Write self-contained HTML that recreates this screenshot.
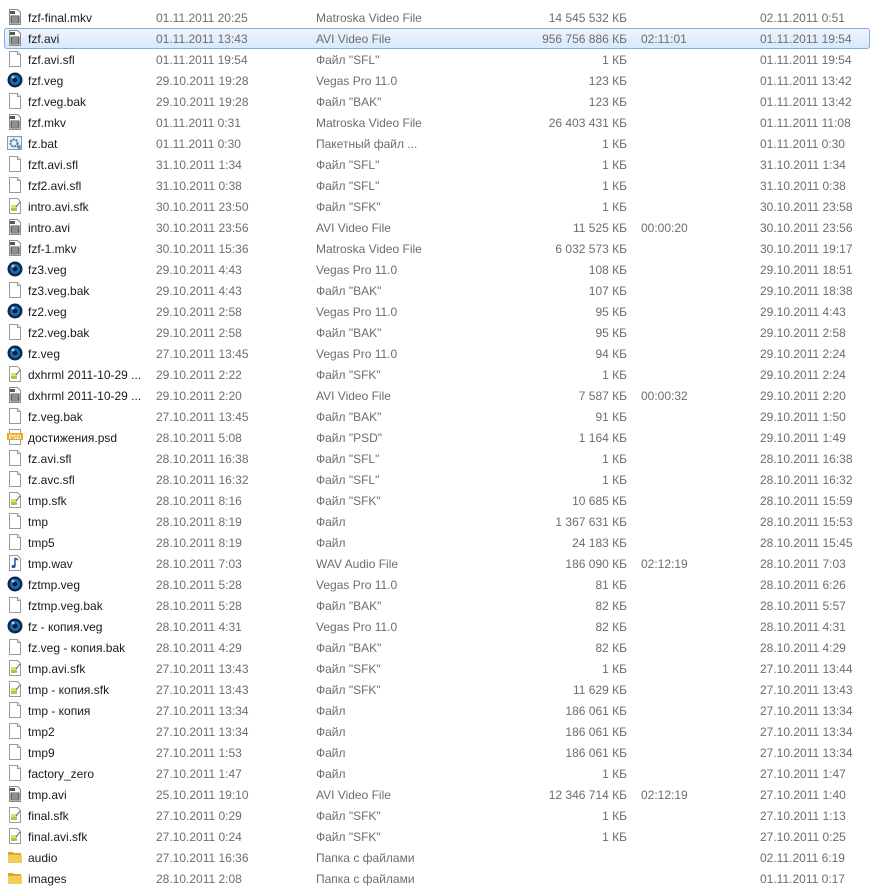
<!DOCTYPE html>
<html><head><meta charset="utf-8"><style>
body{margin:0;background:#fff;width:876px;height:894px;overflow:hidden;font-family:"Liberation Sans","DejaVu Sans",sans-serif;font-size:12px;color:#6d6d6d;position:relative}
.r{position:absolute;left:0;width:876px;height:21px;line-height:21px;white-space:nowrap;margin-top:1px}
.r.sel:before{content:"";position:absolute;left:4px;right:6px;top:-1px;bottom:1px;border:1px solid #84acdd;border-radius:3px;background:linear-gradient(#eef5fd,#d9e8fb)}
.r span{position:absolute;top:0}
.n{left:28px;color:#1a1a1a}
.d{left:156px}.t{left:316px}.s{right:249px;text-align:right}.l{left:641px}.m{left:760px}
svg{position:absolute;left:7px;top:1px}
</style></head><body>
<svg style="display:none"><defs>
<symbol id="doc" viewBox="0 0 16 16"><path d="M2.5 .5h8l3 3v12h-11z" fill="#fff" stroke="#9a9a9a"/><path d="M10.5 .5v3h3" fill="#eee" stroke="#9a9a9a"/></symbol>
<symbol id="vid" viewBox="0 0 16 16"><path d="M2.5 .5h8l3 3v12h-11z" fill="#fff" stroke="#8a8a8a"/><rect x="3" y="2" width="5" height="3" fill="#555"/><rect x="4" y="7" width="8" height="7" fill="#bbb" stroke="#555"/><path d="M5 8v5M7 8v5M9 8v5M11 8v5" stroke="#666"/></symbol>
<symbol id="veg" viewBox="0 0 16 16"><circle cx="8" cy="8" r="7.5" fill="#0c2a4a"/><circle cx="8" cy="8" r="5" fill="#1a6fb8"/><circle cx="8" cy="8" r="2.5" fill="#0b1d33"/><circle cx="6" cy="5" r="1.5" fill="#9fd3ff"/></symbol>
<symbol id="sfk" viewBox="0 0 16 16"><path d="M2.5 .5h8l3 3v12h-11z" fill="#fff" stroke="#9a9a9a"/><rect x="4" y="7" width="6" height="6" fill="#a8c850"/><rect x="4" y="7" width="6" height="3" fill="#e8d870"/><path d="M9 9l4-5" stroke="#555"/></symbol>
<symbol id="bat" viewBox="0 0 16 16"><rect x=".5" y="1.5" width="14" height="13" fill="#e8f0f8" stroke="#7f9bb8"/><circle cx="7" cy="8" r="3.5" fill="none" stroke="#4a6f9a" stroke-width="2" stroke-dasharray="2 1"/><circle cx="12" cy="12" r="2" fill="#6a8fba"/></symbol>
<symbol id="wav" viewBox="0 0 16 16"><path d="M2.5 .5h8l3 3v12h-11z" fill="#fff" stroke="#9a9a9a"/><path d="M8 3v8" stroke="#2a4fb0" stroke-width="1.5"/><ellipse cx="6.5" cy="11.5" rx="2" ry="1.6" fill="#2a4fb0"/><path d="M8 3l3 2" stroke="#2a4fb0" stroke-width="1.5"/></symbol>
<symbol id="psd" viewBox="0 0 16 16"><rect x="2.5" y=".5" width="11" height="15" fill="#fff" stroke="#999"/><rect x="0" y="4" width="16" height="7" fill="#e8a820"/><text x="8" y="10" font-size="6" font-family="Liberation Sans" font-weight="bold" fill="#fff" text-anchor="middle">PSD</text></symbol>
<symbol id="fold" viewBox="0 0 16 16"><path d="M1 3h5l1 1h7v10H1z" fill="#d9a92a"/><path d="M1 6h14v8H1z" fill="#f3cd5a"/></symbol>
</defs></svg>
<div class="r" style="top:7px"><svg width="16" height="16"><use href="#vid"/></svg><span class="n">fzf-final.mkv</span><span class="d">01.11.2011 20:25</span><span class="t">Matroska Video File</span><span class="s">14 545 532 КБ</span><span class="m">02.11.2011 0:51</span></div>
<div class="r sel" style="top:28px"><svg width="16" height="16"><use href="#vid"/></svg><span class="n">fzf.avi</span><span class="d">01.11.2011 13:43</span><span class="t">AVI Video File</span><span class="s">956 756 886 КБ</span><span class="l">02:11:01</span><span class="m">01.11.2011 19:54</span></div>
<div class="r" style="top:49px"><svg width="16" height="16"><use href="#doc"/></svg><span class="n">fzf.avi.sfl</span><span class="d">01.11.2011 19:54</span><span class="t">Файл "SFL"</span><span class="s">1 КБ</span><span class="m">01.11.2011 19:54</span></div>
<div class="r" style="top:70px"><svg width="16" height="16"><use href="#veg"/></svg><span class="n">fzf.veg</span><span class="d">29.10.2011 19:28</span><span class="t">Vegas Pro 11.0</span><span class="s">123 КБ</span><span class="m">01.11.2011 13:42</span></div>
<div class="r" style="top:91px"><svg width="16" height="16"><use href="#doc"/></svg><span class="n">fzf.veg.bak</span><span class="d">29.10.2011 19:28</span><span class="t">Файл "BAK"</span><span class="s">123 КБ</span><span class="m">01.11.2011 13:42</span></div>
<div class="r" style="top:112px"><svg width="16" height="16"><use href="#vid"/></svg><span class="n">fzf.mkv</span><span class="d">01.11.2011 0:31</span><span class="t">Matroska Video File</span><span class="s">26 403 431 КБ</span><span class="m">01.11.2011 11:08</span></div>
<div class="r" style="top:133px"><svg width="16" height="16"><use href="#bat"/></svg><span class="n">fz.bat</span><span class="d">01.11.2011 0:30</span><span class="t">Пакетный файл ...</span><span class="s">1 КБ</span><span class="m">01.11.2011 0:30</span></div>
<div class="r" style="top:154px"><svg width="16" height="16"><use href="#doc"/></svg><span class="n">fzft.avi.sfl</span><span class="d">31.10.2011 1:34</span><span class="t">Файл "SFL"</span><span class="s">1 КБ</span><span class="m">31.10.2011 1:34</span></div>
<div class="r" style="top:175px"><svg width="16" height="16"><use href="#doc"/></svg><span class="n">fzf2.avi.sfl</span><span class="d">31.10.2011 0:38</span><span class="t">Файл "SFL"</span><span class="s">1 КБ</span><span class="m">31.10.2011 0:38</span></div>
<div class="r" style="top:196px"><svg width="16" height="16"><use href="#sfk"/></svg><span class="n">intro.avi.sfk</span><span class="d">30.10.2011 23:50</span><span class="t">Файл "SFK"</span><span class="s">1 КБ</span><span class="m">30.10.2011 23:58</span></div>
<div class="r" style="top:217px"><svg width="16" height="16"><use href="#vid"/></svg><span class="n">intro.avi</span><span class="d">30.10.2011 23:56</span><span class="t">AVI Video File</span><span class="s">11 525 КБ</span><span class="l">00:00:20</span><span class="m">30.10.2011 23:56</span></div>
<div class="r" style="top:238px"><svg width="16" height="16"><use href="#vid"/></svg><span class="n">fzf-1.mkv</span><span class="d">30.10.2011 15:36</span><span class="t">Matroska Video File</span><span class="s">6 032 573 КБ</span><span class="m">30.10.2011 19:17</span></div>
<div class="r" style="top:259px"><svg width="16" height="16"><use href="#veg"/></svg><span class="n">fz3.veg</span><span class="d">29.10.2011 4:43</span><span class="t">Vegas Pro 11.0</span><span class="s">108 КБ</span><span class="m">29.10.2011 18:51</span></div>
<div class="r" style="top:280px"><svg width="16" height="16"><use href="#doc"/></svg><span class="n">fz3.veg.bak</span><span class="d">29.10.2011 4:43</span><span class="t">Файл "BAK"</span><span class="s">107 КБ</span><span class="m">29.10.2011 18:38</span></div>
<div class="r" style="top:301px"><svg width="16" height="16"><use href="#veg"/></svg><span class="n">fz2.veg</span><span class="d">29.10.2011 2:58</span><span class="t">Vegas Pro 11.0</span><span class="s">95 КБ</span><span class="m">29.10.2011 4:43</span></div>
<div class="r" style="top:322px"><svg width="16" height="16"><use href="#doc"/></svg><span class="n">fz2.veg.bak</span><span class="d">29.10.2011 2:58</span><span class="t">Файл "BAK"</span><span class="s">95 КБ</span><span class="m">29.10.2011 2:58</span></div>
<div class="r" style="top:343px"><svg width="16" height="16"><use href="#veg"/></svg><span class="n">fz.veg</span><span class="d">27.10.2011 13:45</span><span class="t">Vegas Pro 11.0</span><span class="s">94 КБ</span><span class="m">29.10.2011 2:24</span></div>
<div class="r" style="top:364px"><svg width="16" height="16"><use href="#sfk"/></svg><span class="n">dxhrml 2011-10-29 ...</span><span class="d">29.10.2011 2:22</span><span class="t">Файл "SFK"</span><span class="s">1 КБ</span><span class="m">29.10.2011 2:24</span></div>
<div class="r" style="top:385px"><svg width="16" height="16"><use href="#vid"/></svg><span class="n">dxhrml 2011-10-29 ...</span><span class="d">29.10.2011 2:20</span><span class="t">AVI Video File</span><span class="s">7 587 КБ</span><span class="l">00:00:32</span><span class="m">29.10.2011 2:20</span></div>
<div class="r" style="top:406px"><svg width="16" height="16"><use href="#doc"/></svg><span class="n">fz.veg.bak</span><span class="d">27.10.2011 13:45</span><span class="t">Файл "BAK"</span><span class="s">91 КБ</span><span class="m">29.10.2011 1:50</span></div>
<div class="r" style="top:427px"><svg width="16" height="16"><use href="#psd"/></svg><span class="n">достижения.psd</span><span class="d">28.10.2011 5:08</span><span class="t">Файл "PSD"</span><span class="s">1 164 КБ</span><span class="m">29.10.2011 1:49</span></div>
<div class="r" style="top:448px"><svg width="16" height="16"><use href="#doc"/></svg><span class="n">fz.avi.sfl</span><span class="d">28.10.2011 16:38</span><span class="t">Файл "SFL"</span><span class="s">1 КБ</span><span class="m">28.10.2011 16:38</span></div>
<div class="r" style="top:469px"><svg width="16" height="16"><use href="#doc"/></svg><span class="n">fz.avc.sfl</span><span class="d">28.10.2011 16:32</span><span class="t">Файл "SFL"</span><span class="s">1 КБ</span><span class="m">28.10.2011 16:32</span></div>
<div class="r" style="top:490px"><svg width="16" height="16"><use href="#sfk"/></svg><span class="n">tmp.sfk</span><span class="d">28.10.2011 8:16</span><span class="t">Файл "SFK"</span><span class="s">10 685 КБ</span><span class="m">28.10.2011 15:59</span></div>
<div class="r" style="top:511px"><svg width="16" height="16"><use href="#doc"/></svg><span class="n">tmp</span><span class="d">28.10.2011 8:19</span><span class="t">Файл</span><span class="s">1 367 631 КБ</span><span class="m">28.10.2011 15:53</span></div>
<div class="r" style="top:532px"><svg width="16" height="16"><use href="#doc"/></svg><span class="n">tmp5</span><span class="d">28.10.2011 8:19</span><span class="t">Файл</span><span class="s">24 183 КБ</span><span class="m">28.10.2011 15:45</span></div>
<div class="r" style="top:553px"><svg width="16" height="16"><use href="#wav"/></svg><span class="n">tmp.wav</span><span class="d">28.10.2011 7:03</span><span class="t">WAV Audio File</span><span class="s">186 090 КБ</span><span class="l">02:12:19</span><span class="m">28.10.2011 7:03</span></div>
<div class="r" style="top:574px"><svg width="16" height="16"><use href="#veg"/></svg><span class="n">fztmp.veg</span><span class="d">28.10.2011 5:28</span><span class="t">Vegas Pro 11.0</span><span class="s">81 КБ</span><span class="m">28.10.2011 6:26</span></div>
<div class="r" style="top:595px"><svg width="16" height="16"><use href="#doc"/></svg><span class="n">fztmp.veg.bak</span><span class="d">28.10.2011 5:28</span><span class="t">Файл "BAK"</span><span class="s">82 КБ</span><span class="m">28.10.2011 5:57</span></div>
<div class="r" style="top:616px"><svg width="16" height="16"><use href="#veg"/></svg><span class="n">fz - копия.veg</span><span class="d">28.10.2011 4:31</span><span class="t">Vegas Pro 11.0</span><span class="s">82 КБ</span><span class="m">28.10.2011 4:31</span></div>
<div class="r" style="top:637px"><svg width="16" height="16"><use href="#doc"/></svg><span class="n">fz.veg - копия.bak</span><span class="d">28.10.2011 4:29</span><span class="t">Файл "BAK"</span><span class="s">82 КБ</span><span class="m">28.10.2011 4:29</span></div>
<div class="r" style="top:658px"><svg width="16" height="16"><use href="#sfk"/></svg><span class="n">tmp.avi.sfk</span><span class="d">27.10.2011 13:43</span><span class="t">Файл "SFK"</span><span class="s">1 КБ</span><span class="m">27.10.2011 13:44</span></div>
<div class="r" style="top:679px"><svg width="16" height="16"><use href="#sfk"/></svg><span class="n">tmp - копия.sfk</span><span class="d">27.10.2011 13:43</span><span class="t">Файл "SFK"</span><span class="s">11 629 КБ</span><span class="m">27.10.2011 13:43</span></div>
<div class="r" style="top:700px"><svg width="16" height="16"><use href="#doc"/></svg><span class="n">tmp - копия</span><span class="d">27.10.2011 13:34</span><span class="t">Файл</span><span class="s">186 061 КБ</span><span class="m">27.10.2011 13:34</span></div>
<div class="r" style="top:721px"><svg width="16" height="16"><use href="#doc"/></svg><span class="n">tmp2</span><span class="d">27.10.2011 13:34</span><span class="t">Файл</span><span class="s">186 061 КБ</span><span class="m">27.10.2011 13:34</span></div>
<div class="r" style="top:742px"><svg width="16" height="16"><use href="#doc"/></svg><span class="n">tmp9</span><span class="d">27.10.2011 1:53</span><span class="t">Файл</span><span class="s">186 061 КБ</span><span class="m">27.10.2011 13:34</span></div>
<div class="r" style="top:763px"><svg width="16" height="16"><use href="#doc"/></svg><span class="n">factory_zero</span><span class="d">27.10.2011 1:47</span><span class="t">Файл</span><span class="s">1 КБ</span><span class="m">27.10.2011 1:47</span></div>
<div class="r" style="top:784px"><svg width="16" height="16"><use href="#vid"/></svg><span class="n">tmp.avi</span><span class="d">25.10.2011 19:10</span><span class="t">AVI Video File</span><span class="s">12 346 714 КБ</span><span class="l">02:12:19</span><span class="m">27.10.2011 1:40</span></div>
<div class="r" style="top:805px"><svg width="16" height="16"><use href="#sfk"/></svg><span class="n">final.sfk</span><span class="d">27.10.2011 0:29</span><span class="t">Файл "SFK"</span><span class="s">1 КБ</span><span class="m">27.10.2011 1:13</span></div>
<div class="r" style="top:826px"><svg width="16" height="16"><use href="#sfk"/></svg><span class="n">final.avi.sfk</span><span class="d">27.10.2011 0:24</span><span class="t">Файл "SFK"</span><span class="s">1 КБ</span><span class="m">27.10.2011 0:25</span></div>
<div class="r" style="top:847px"><svg width="16" height="16"><use href="#fold"/></svg><span class="n">audio</span><span class="d">27.10.2011 16:36</span><span class="t">Папка с файлами</span><span class="m">02.11.2011 6:19</span></div>
<div class="r" style="top:868px"><svg width="16" height="16"><use href="#fold"/></svg><span class="n">images</span><span class="d">28.10.2011 2:08</span><span class="t">Папка с файлами</span><span class="m">01.11.2011 0:17</span></div>
</body></html>
